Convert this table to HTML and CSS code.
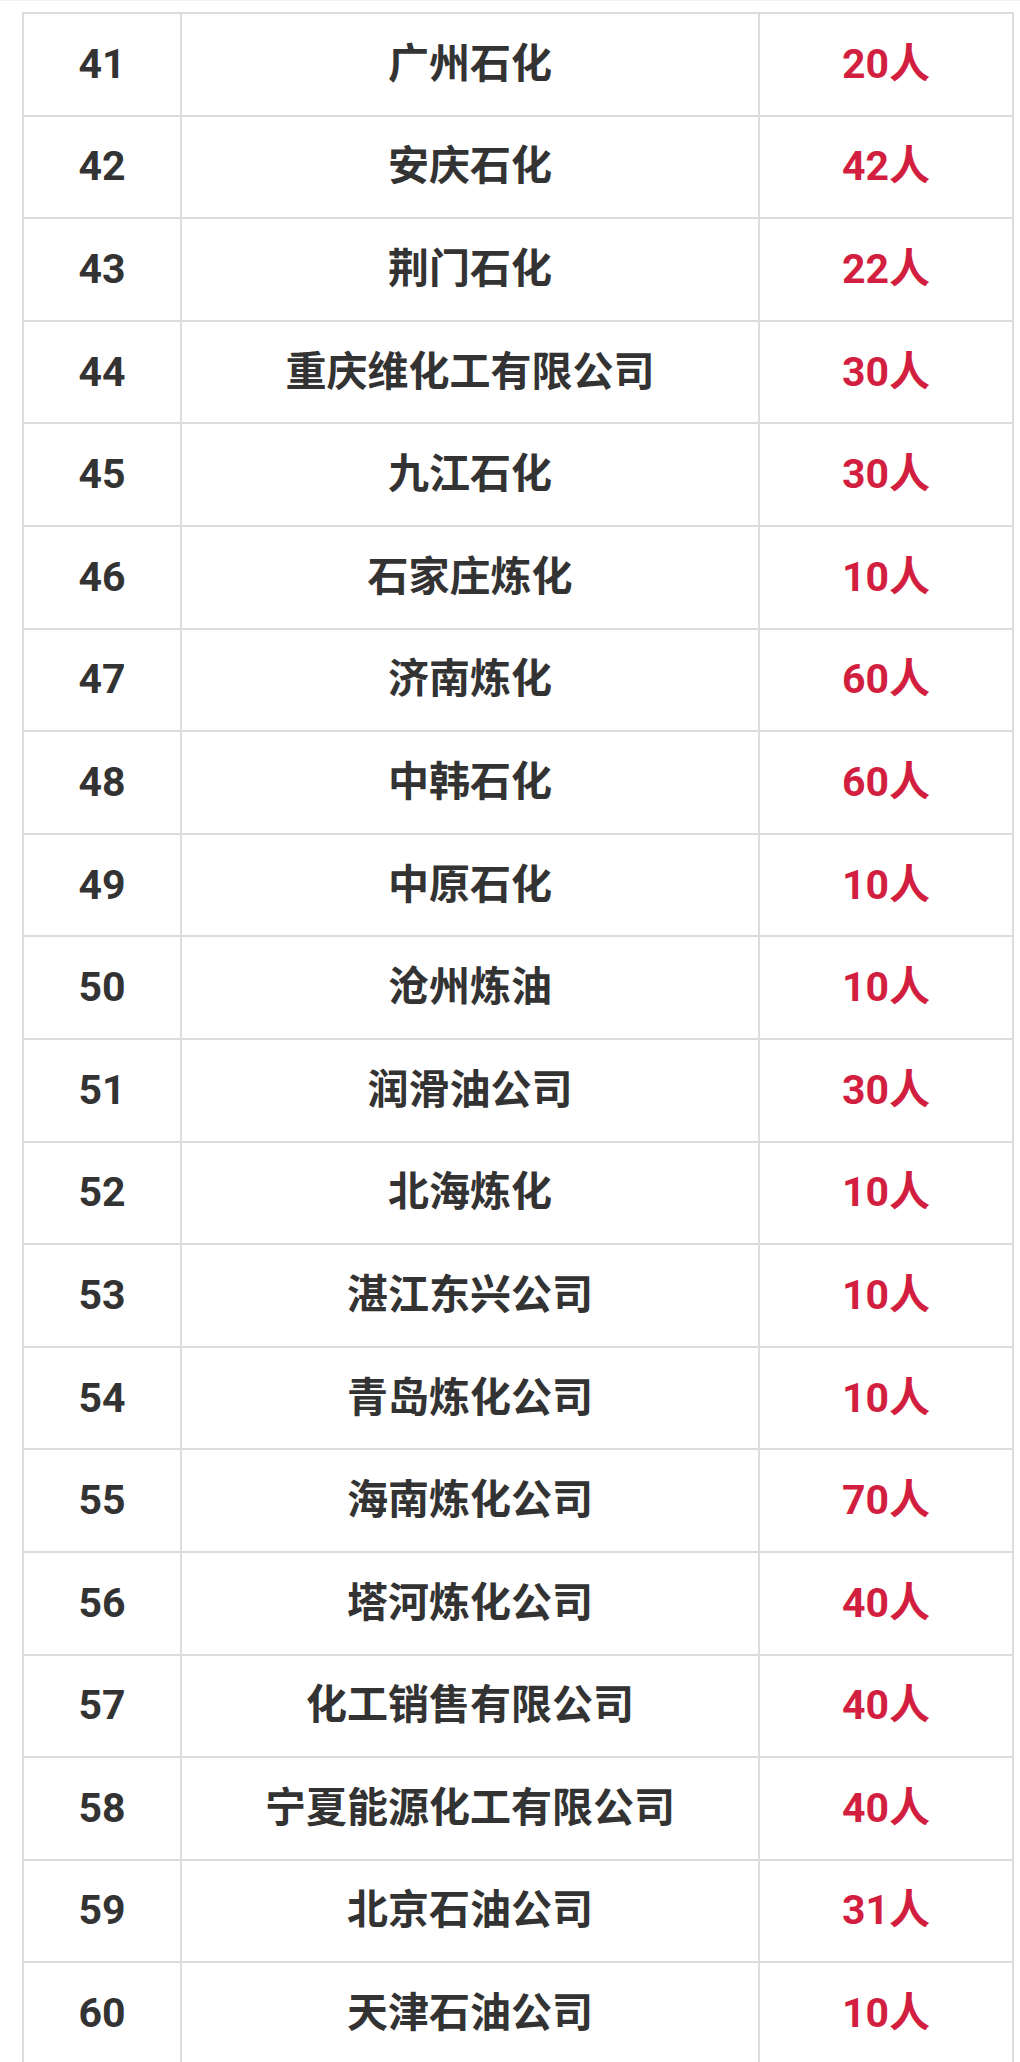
FILE: index.html
```html
<!DOCTYPE html>
<html lang="zh-CN">
<head>
    <meta charset="UTF-8">
    <meta name="viewport" content="width=device-width, initial-scale=1.0">
    <title>名额分配</title>
    <link rel="stylesheet" href="styles.css">
</head>
<body>
    <div class="container">
        <table class="quota">
            <tbody>
                <tr><td class="num">41</td><td class="name">广州石化</td><td class="count">20人</td></tr>
                <tr><td class="num">42</td><td class="name">安庆石化</td><td class="count">42人</td></tr>
                <tr><td class="num">43</td><td class="name">荆门石化</td><td class="count">22人</td></tr>
                <tr><td class="num">44</td><td class="name">重庆维化工有限公司</td><td class="count">30人</td></tr>
                <tr><td class="num">45</td><td class="name">九江石化</td><td class="count">30人</td></tr>
                <tr><td class="num">46</td><td class="name">石家庄炼化</td><td class="count">10人</td></tr>
                <tr><td class="num">47</td><td class="name">济南炼化</td><td class="count">60人</td></tr>
                <tr><td class="num">48</td><td class="name">中韩石化</td><td class="count">60人</td></tr>
                <tr><td class="num">49</td><td class="name">中原石化</td><td class="count">10人</td></tr>
                <tr><td class="num">50</td><td class="name">沧州炼油</td><td class="count">10人</td></tr>
                <tr><td class="num">51</td><td class="name">润滑油公司</td><td class="count">30人</td></tr>
                <tr><td class="num">52</td><td class="name">北海炼化</td><td class="count">10人</td></tr>
                <tr><td class="num">53</td><td class="name">湛江东兴公司</td><td class="count">10人</td></tr>
                <tr><td class="num">54</td><td class="name">青岛炼化公司</td><td class="count">10人</td></tr>
                <tr><td class="num">55</td><td class="name">海南炼化公司</td><td class="count">70人</td></tr>
                <tr><td class="num">56</td><td class="name">塔河炼化公司</td><td class="count">40人</td></tr>
                <tr><td class="num">57</td><td class="name">化工销售有限公司</td><td class="count">40人</td></tr>
                <tr><td class="num">58</td><td class="name">宁夏能源化工有限公司</td><td class="count">40人</td></tr>
                <tr><td class="num">59</td><td class="name">北京石油公司</td><td class="count">31人</td></tr>
                <tr><td class="num">60</td><td class="name">天津石油公司</td><td class="count">10人</td></tr>
            </tbody>
        </table>
    </div>
</body>
</html>
```

FILE: styles.css
```css
body {
    margin: 0;
    background-color: #fff;
    color: #333;
    font-family: Roboto, "Noto Sans CJK SC", sans-serif;
}
.container {
    padding: 11px 6px 0 22px;
    border-top: 1px solid #f2f2f2;
}
.quota {
    width: 992px;
    border-collapse: collapse;
    table-layout: fixed;
}
.quota td {
    height: 100.6px;
    padding: 0;
    border: 2px solid #dcdcdc;
    text-align: center;
    vertical-align: middle;
    font-size: 41px;
    font-weight: 700;
    line-height: 1;
}
.num {
    width: 156px;
}
.name {
    width: 576px;
}
.count {
    color: #d21f40;
}
```
